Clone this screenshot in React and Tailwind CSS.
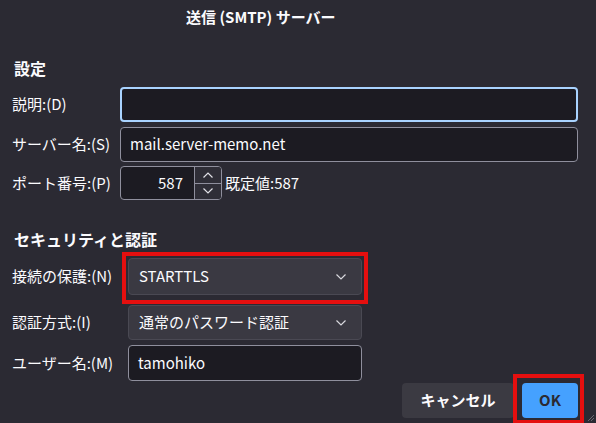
import React from "react";

const Chevron = ({ className = "" }) => (
  <svg width="12" height="8" viewBox="0 0 12 8" className={className} fill="none">
    <polyline points="1.5,1.5 6,6 10.5,1.5" stroke="#d8d8de" strokeWidth="1.2" />
  </svg>
);

const Up = () => (
  <svg width="12" height="8" viewBox="0 0 12 8" fill="none">
    <polyline points="1.5,6.5 6,2 10.5,6.5" stroke="#e0e0e6" strokeWidth="1.2" />
  </svg>
);
const Down = () => (
  <svg width="12" height="8" viewBox="0 0 12 8" fill="none">
    <polyline points="1.5,1.5 6,6 10.5,1.5" stroke="#e0e0e6" strokeWidth="1.2" />
  </svg>
);

export default function App() {
  return (
    <div
      className="relative w-[596px] h-[423px] overflow-hidden bg-[#2b2a33] text-[#fbfbfe] text-[15px]"
      style={{ fontFamily: '"Noto Sans CJK JP", "Noto Sans", sans-serif' }}
    >
      <div className="h-[34px] flex items-center pl-[186px] font-bold text-[15px]">
        送信 (SMTP) サーバー
      </div>

      <div className="mt-[24px] h-[20px] leading-[20px] pl-[14px] font-bold text-[16px]">設定</div>

      <div className="mt-[9px] pl-[12px] pr-[18px] flex flex-col">
        <div className="flex items-center h-[35px]">
          <div className="w-[108px]">説明:(D)</div>
          <div className="flex-1 h-full rounded-[4px] border-2 border-[#a9d3ff] bg-[#1c1b22]" />
        </div>
        <div className="flex items-center h-[35px] mt-[5px]">
          <div className="w-[108px]">サーバー名:(S)</div>
          <div className="flex-1 h-full rounded-[4px] border border-[#8f8f9d] bg-[#1c1b22] flex items-center pl-[9px]">
            mail.server-memo.net
          </div>
        </div>
        <div className="flex items-center h-[34px] mt-[4px]">
          <div className="w-[108px]">ポート番号:(P)</div>
          <div className="w-[102px] h-full rounded-[4px] border border-[#8f8f9d] bg-[#1c1b22] flex overflow-hidden">
            <div className="flex-1 flex items-center justify-end pr-[11px]">587</div>
            <div className="w-[27px] flex flex-col border-l border-[#8f8f9d] bg-[#2f2e37]">
              <div className="flex-1 flex items-center justify-center border-b border-[#8f8f9d]">
                <Up />
              </div>
              <div className="flex-1 flex items-center justify-center">
                <Down />
              </div>
            </div>
          </div>
          <div className="ml-[3px]">既定値:587</div>
        </div>
      </div>

      <div className="mt-[29px] h-[20px] leading-[20px] pl-[14px] font-bold text-[16px]">セキュリティと認証</div>

      <div className="pl-[12px] flex flex-col">
        <div className="flex items-center h-[37px] mt-[9px]">
          <div className="w-[116px]">接続の保護:(N)</div>
          <div className="w-[234px] h-full rounded-[4px] border border-[#4a4953] bg-[#3a3942] flex items-center justify-between pl-[10px] pr-[14px]">
            <span>STARTTLS</span>
            <Chevron />
          </div>
        </div>
        <div className="flex items-center h-[35px] mt-[10px]">
          <div className="w-[116px]">認証方式:(I)</div>
          <div className="w-[234px] h-full rounded-[4px] border border-[#4a4953] bg-[#3a3942] flex items-center justify-between pl-[10px] pr-[14px]">
            <span>通常のパスワード認証</span>
            <Chevron />
          </div>
        </div>
        <div className="flex items-center h-[36px] mt-[5px]">
          <div className="w-[116px]">ユーザー名:(M)</div>
          <div className="w-[234px] h-full rounded-[4px] border border-[#8f8f9d] bg-[#1c1b22] flex items-center pl-[9px]">
            tamohiko
          </div>
        </div>
      </div>

      <div className="mt-[2px] pr-[18px] flex justify-end gap-[8px]">
        <div className="w-[112px] h-[35px] rounded-[4px] bg-[#3b3a42] flex items-center justify-center font-bold">
          キャンセル
        </div>
        <div className="w-[56px] h-[35px] rounded-[4px] bg-[#45a1ff] text-[#2b2a33] flex items-center justify-center font-bold">
          OK
        </div>
      </div>

      <div className="absolute left-[122px] top-[252px] w-[246px] h-[52px] border-4 border-[#e50f0f]" />
      <div className="absolute left-[513px] top-[374px] w-[71px] h-[50px] border-4 border-[#e50f0f]" />

      <svg className="absolute right-[1px] bottom-[1px]" width="8" height="8" viewBox="0 0 8 8">
        <line x1="7" y1="1" x2="1" y2="7" stroke="#6b6a72" strokeWidth="1" />
        <line x1="7" y1="4" x2="4" y2="7" stroke="#6b6a72" strokeWidth="1" />
      </svg>
    </div>
  );
}
